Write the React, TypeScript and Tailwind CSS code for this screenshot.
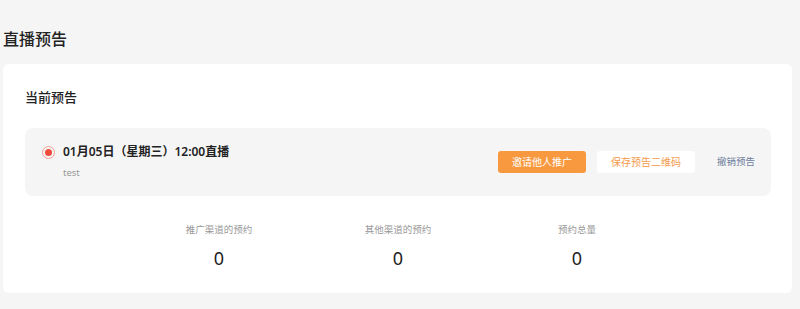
import React from "react";

export default function App() {
  const stats = [
    { label: "推广渠道的预约", value: "0" },
    { label: "其他渠道的预约", value: "0" },
    { label: "预约总量", value: "0" },
  ];
  return (
    <div
      className="w-[800px] h-[309px] overflow-hidden bg-[#f5f5f5] pl-[3px] pr-[8px]"
      style={{ fontFamily: '"Noto Sans", "Noto Sans CJK SC", sans-serif' }}
    >
      <div className="pt-[28px] mb-[14px] text-[16px] leading-[22px] font-medium text-[#222]">直播预告</div>
      <div className="bg-white rounded-[6px] pl-[22px] pr-[21px] pt-[24px] pb-[23px]">
        <div className="text-[13px] leading-[18px] font-medium text-[#222] mb-[22px]">当前预告</div>
        <div className="h-[68px] rounded-[8px] bg-[#f5f5f5] flex items-center justify-between pl-[17px] pr-[16px]">
          <div className="self-start pt-[16px]">
            <div className="flex items-center h-[16px]">
              <span className="w-[13px] h-[13px] rounded-full border border-[#f3a091] flex items-center justify-center mr-[8px]">
                <span className="w-[7px] h-[7px] rounded-full bg-[#ef4d3c]"></span>
              </span>
              <span className="text-[12px] leading-[16px] font-semibold text-[#222]">01月05日（星期三）12:00直播</span>
            </div>
            <div className="mt-[6px] pl-[21px] text-[9.5px] leading-[14px] text-[#999]">test</div>
          </div>
          <div className="flex items-center">
            <button className="h-[22px] px-[14px] rounded-[3px] bg-[#f8993f] text-white text-[10px] leading-[22px]">邀请他人推广</button>
            <button className="ml-[11px] h-[22px] px-[14px] rounded-[3px] bg-white text-[#f39a4a] text-[10px] leading-[22px]">保存预告二维码</button>
            <button className="ml-[22px] text-[9.5px] leading-[22px] text-[#6e7d9c]">撤销预告</button>
          </div>
        </div>
        <div className="flex justify-center mt-[27px]">
          {stats.map((s) => (
            <div key={s.label} className="w-[179px] flex flex-col items-center">
              <div className="text-[9.5px] leading-[14px] text-[#999]">{s.label}</div>
              <div className="mt-[9px] text-[18px] leading-[24px] text-[#222]">{s.value}</div>
            </div>
          ))}
        </div>
      </div>
    </div>
  );
}
